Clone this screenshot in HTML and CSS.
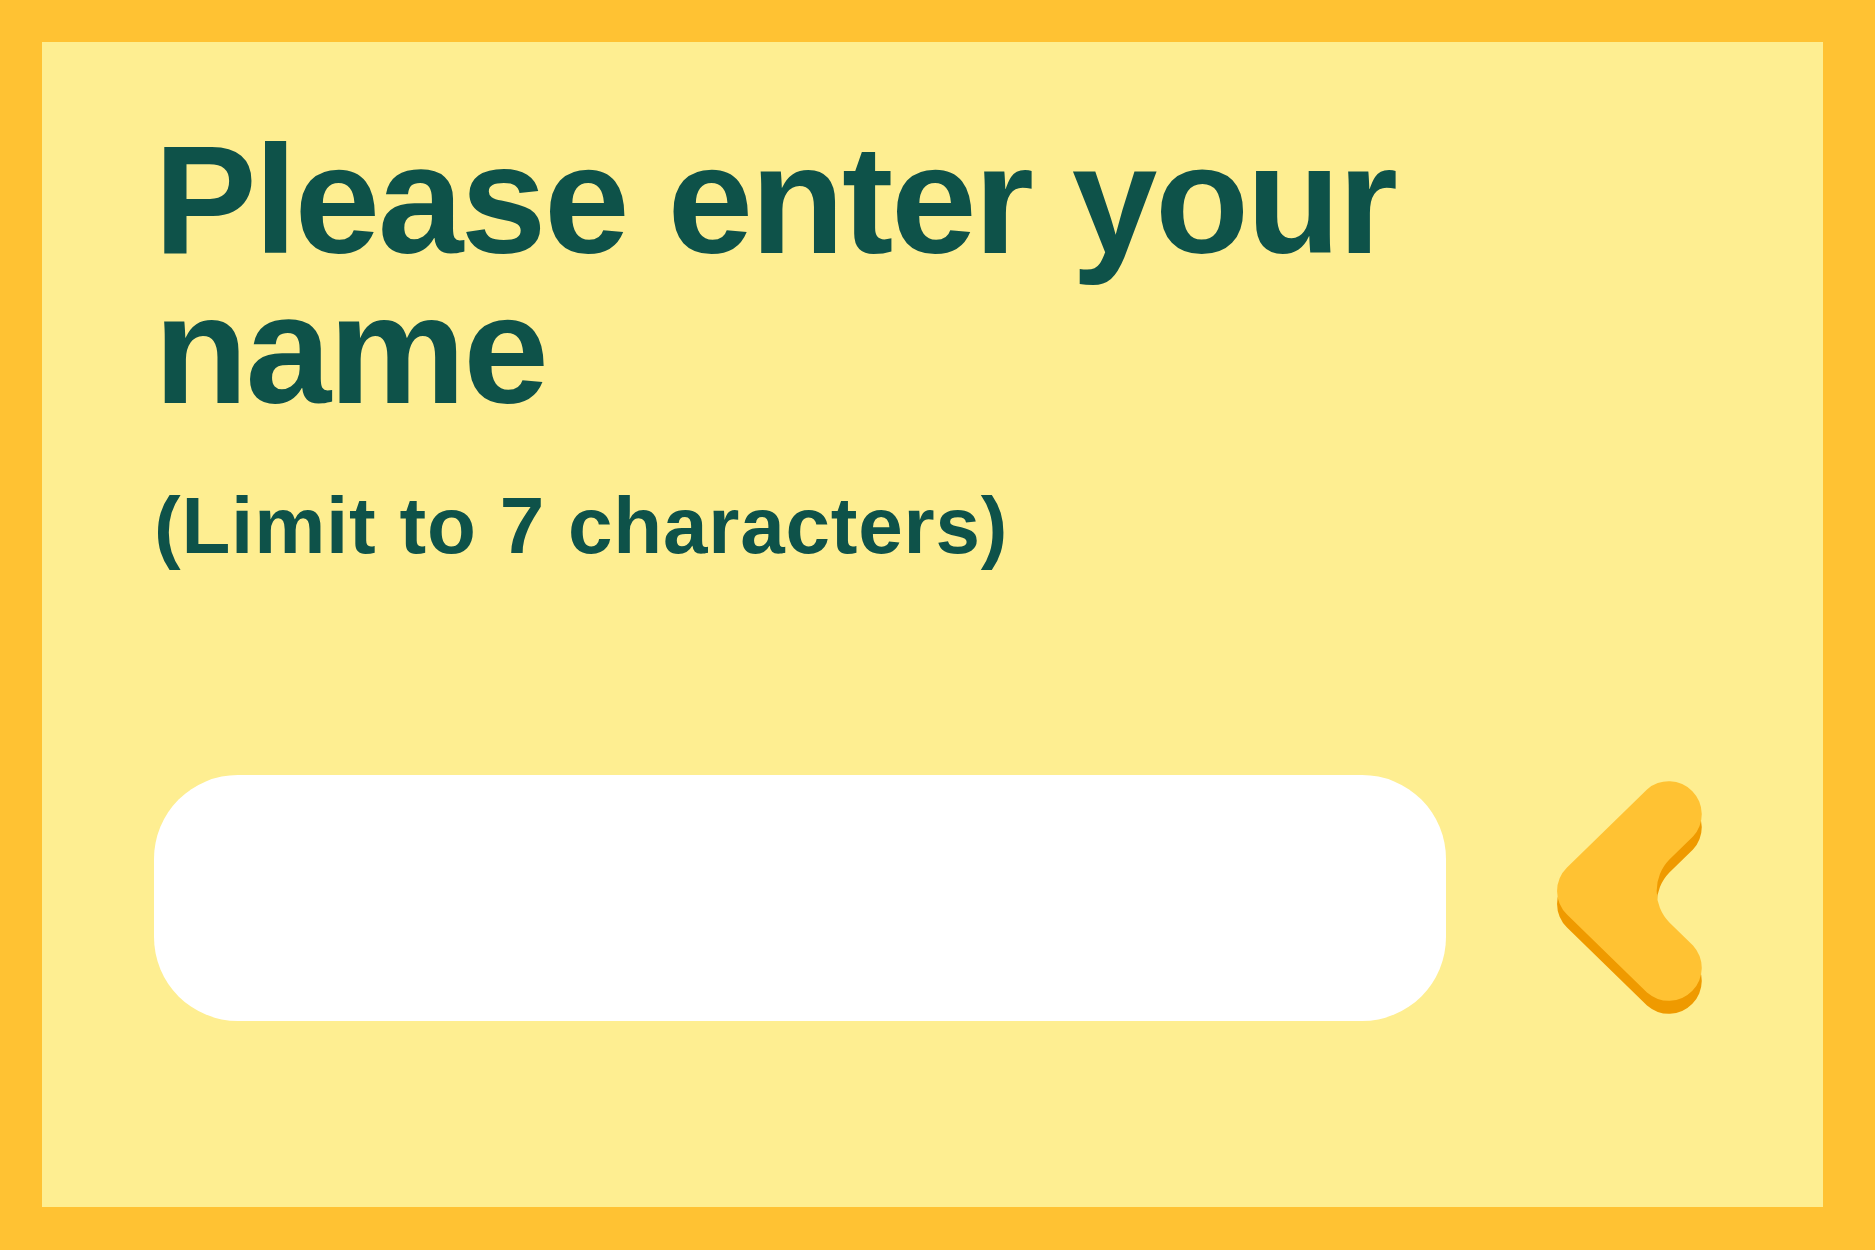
FILE: index.html
```html
<!DOCTYPE html>
<html lang="en">
<head>
<meta charset="utf-8">
<title>Enter your name</title>
<link rel="stylesheet" href="styles.css">
</head>
<body>
<main class="frame">
  <h1 class="title">Please enter your name</h1>
  <p class="hint">(Limit to 7 characters)</p>
  <div class="entry-row">
    <input class="name-input" type="text" maxlength="7" aria-label="Name">
    <button class="back-btn" type="button" aria-label="Back">
      <svg class="chevron" width="146" height="236" viewBox="0 0 146 236">
        <g transform="translate(0,13)">
          <path class="chevron-shadow" d="M90 9.4 A33 33 0 0 1 136 56.6 L112.4 79.6 A45 45 0 0 0 112.4 142.4 L136 165.4 A33 33 0 0 1 90 212.6 L10 134.6 A33 33 0 0 1 10 87.4 Z"/>
        </g>
        <path class="chevron-face" d="M90 9.4 A33 33 0 0 1 136 56.6 L112.4 79.6 A45 45 0 0 0 112.4 142.4 L136 165.4 A33 33 0 0 1 90 212.6 L10 134.6 A33 33 0 0 1 10 87.4 Z"/>
      </svg>
    </button>
  </div>
</main>
</body>
</html>
```

FILE: styles.css
```css
html, body {
  margin: 0;
  padding: 0;
}

body {
  font-family: "Liberation Sans", Arial, sans-serif;
  background: #FFC233;
}

.frame {
  box-sizing: border-box;
  width: 1875px;
  height: 1250px;
  border-style: solid;
  border-color: #FFC233;
  border-width: 42px 52px 43px 42px;
  background: #FEEE91;
  padding: 83px 0 0 112px;
  display: flex;
  flex-direction: column;
  align-items: flex-start;
}

.title {
  margin: 0;
  max-width: 1320px;
  font-size: 154px;
  line-height: 150px;
  letter-spacing: -2.5px;
  font-weight: 700;
  color: #0E5249;
}

.hint {
  margin: 61px 0 0 0;
  font-size: 80px;
  line-height: 80px;
  letter-spacing: 0.8px;
  font-weight: 700;
  color: #0E5249;
}

.entry-row {
  margin-top: 209px;
  display: flex;
  align-items: center;
  gap: 111px;
}

.name-input {
  box-sizing: border-box;
  width: 1292px;
  height: 246px;
  border: none;
  outline: none;
  border-radius: 84px;
  background: #FFFFFF;
  padding: 0 84px;
  font-family: "Liberation Sans", Arial, sans-serif;
  font-size: 110px;
  font-weight: 700;
  color: #0E5249;
}

.back-btn {
  display: flex;
  padding: 0;
  margin: 0;
  border: none;
  background: transparent;
  cursor: pointer;
}

.chevron {
  display: block;
}

.chevron-face {
  fill: #FFC233;
}

.chevron-shadow {
  fill: #EF9A00;
}
```
